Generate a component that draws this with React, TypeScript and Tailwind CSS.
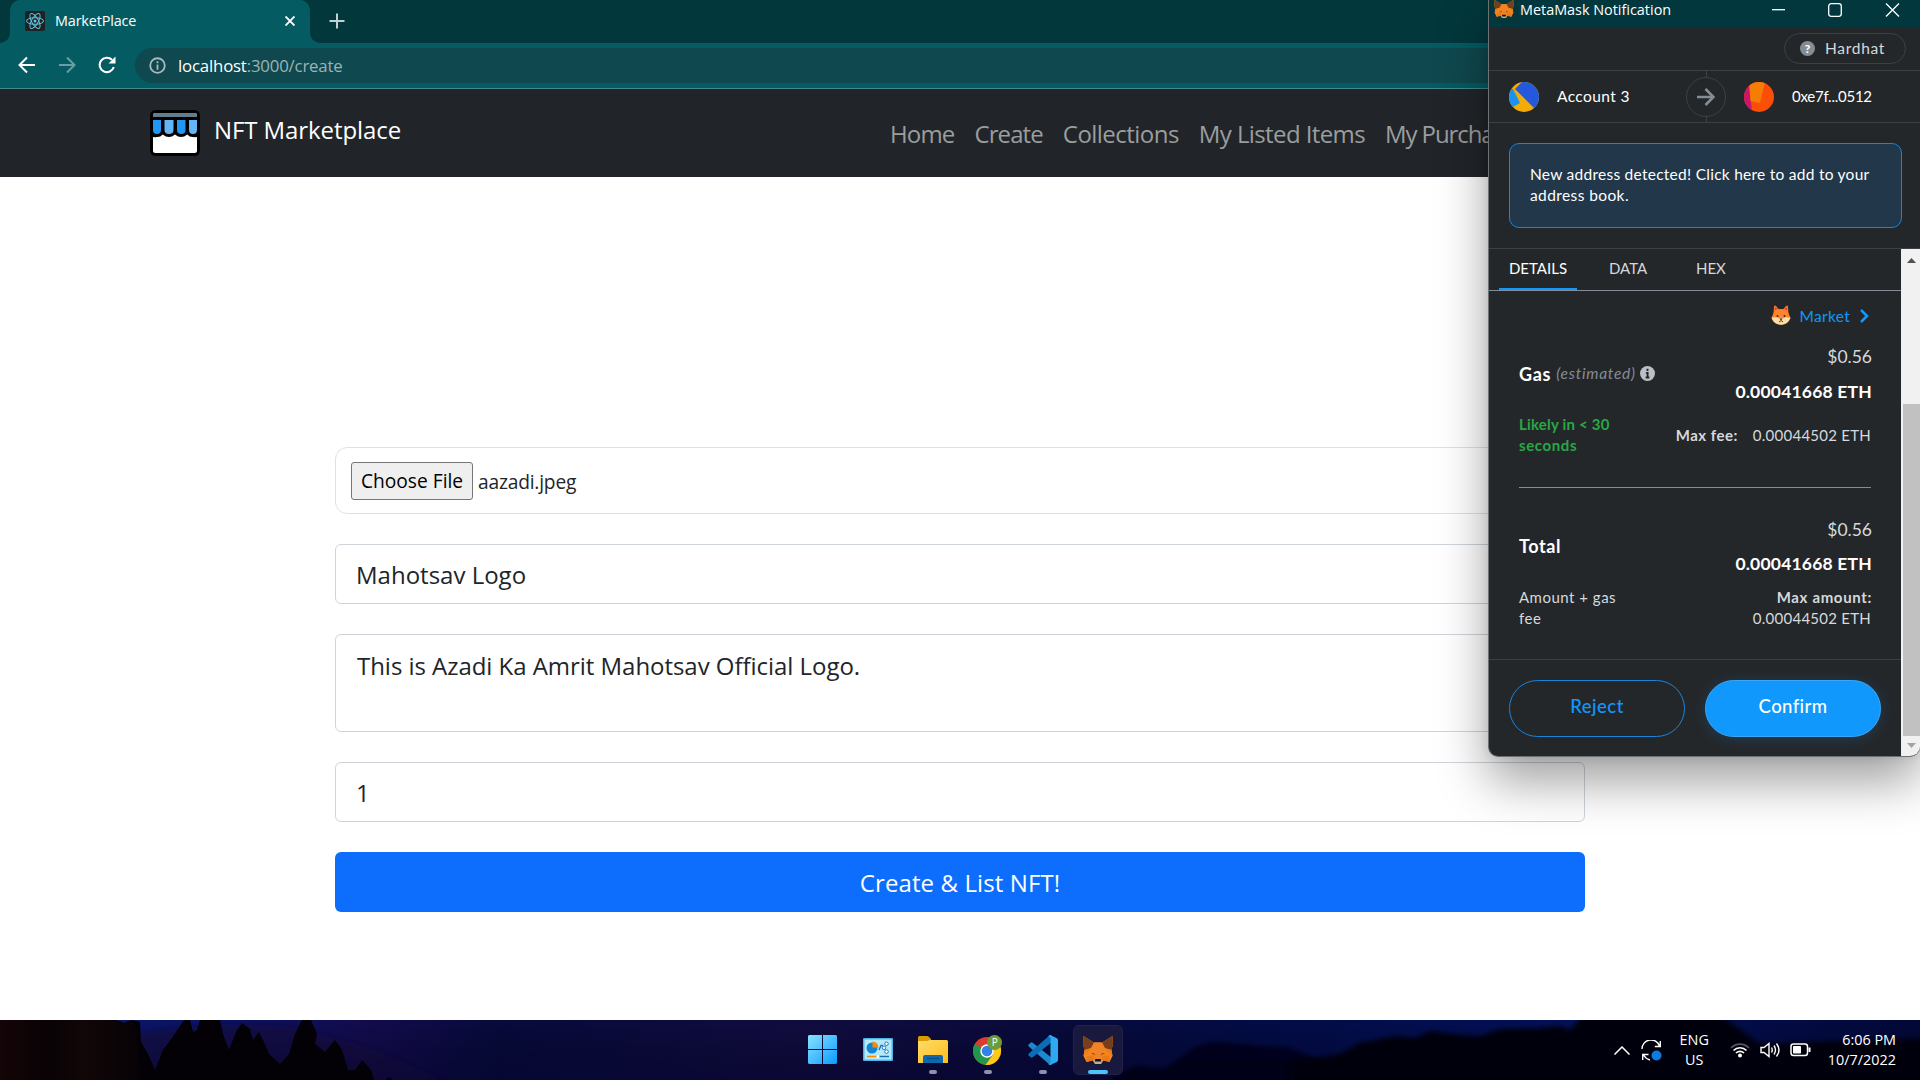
import React from "react";

function MetaFox({ className }: { className: string }) {
  return (
    <svg viewBox="0 0 30 28" className={className}>
      <path d="M0.5 0 L11 6.5 H19 L29.5 0 L30 8 L28.500 14 L29.5 20 L26.5 26 L20.500 24.5 L18 28 H12 L9.500 24.5 L3.500 26 L0.500 20 L1.500 14 L0 8Z" fill="#f6851b" />
      <path d="M0.500 0 L11 6.500 L8 12 L1.500 14 L0 8Z M29.500 0 L19 6.500 L22 12 L28.500 14 L30 8Z" fill="#763e1a" />
      <path d="M11 6.500 L8.500 13 L12 19.500 L11 24 L19 24 L18 19.500 L21.500 13 L19 6.500Z" fill="#f08228" />
      <path d="M0.500 20 L1.500 14 L8.500 13 L3 18Z M29.500 20 L28.500 14 L21.500 13 L27 18Z" fill="#ec7c1c" />
      <path d="M8 17 L12.500 19.300 L10.500 17.200Z M22 17 L17.500 19.300 L19.500 17.200Z" fill="#59371f" />
      <path d="M4 20 L10.500 19.500 L11 24 L3.500 26Z M26 20 L19.500 19.500 L19 24 L26.500 26Z" fill="#e8791b" />
      <path d="M10.500 24 H19.500 L18 28 H12Z" fill="#c0ad9e" />
      <path d="M12.300 23 H17.700 L18.200 25.500 H11.800Z" fill="#161616" />
    </svg>
  );
}

function EmojiFox() {
  return (
    <svg viewBox="0 0 20 20" className="h-5 w-5">
      <path d="M2.500 9 L3 1.200 Q4 0 5 1 L8 4.500 H12 L15 1 Q16 0 17 1.200 L17.500 9Z" fill="#f9752b" />
      <path d="M4 5 L4.500 2 L6.500 4.500Z M16 5 L15.500 2 L13.500 4.500Z" fill="#b8432a" />
      <path d="M3 7 Q4 4 10 4 Q16 4 17 7 L19.500 13 Q17 19.500 10 19.800 Q3 19.500 0.500 13Z" fill="#ff822d" />
      <path d="M0.500 12.800 Q6 11.500 8.300 13.500 L10 12.500 L11.700 13.500 Q14 11.500 19.500 12.800 Q17 19.500 10 19.800 Q3 19.500 0.500 12.800Z" fill="#ffdda6" />
      <circle cx="6.500" cy="11" r="0.900" fill="#3a2020" />
      <circle cx="13.500" cy="11" r="0.900" fill="#3a2020" />
      <path d="M8.500 13.500 H11.500 L10 15.500Z" fill="#2b1a1a" />
      <path d="M8 17 L10 15.500 L12 17" stroke="#5a3a2a" fill="none" />
    </svg>
  );
}

function BrowserChrome() {
  return (
    <header className="h-[89px] shrink-0 border-b border-[#43898c] bg-[#045b61]">
      <div className="flex h-[43px] bg-[#02373c]">
        <div className="w-[10px] bg-[#045b61]">
          <div className="h-full rounded-br-[10px] bg-[#02373c]" />
        </div>
        <div className="flex w-[300px] items-center rounded-t-[10px] bg-[#045b61] pr-[15px] pb-px pl-[15px]">
          <svg viewBox="0 0 20 20" className="h-5 w-5" fill="none" stroke="#5cc4dc" strokeWidth="1">
            <rect width="20" height="20" rx="2" fill="#202124" stroke="none" />
            <ellipse cx="10" cy="10" rx="8.500" ry="3.300" />
            <ellipse cx="10" cy="10" rx="8.500" ry="3.300" transform="rotate(60 10 10)" />
            <ellipse cx="10" cy="10" rx="8.500" ry="3.300" transform="rotate(120 10 10)" />
            <circle cx="10" cy="10" r="1.500" fill="#5cc4dc" stroke="none" />
          </svg>
          <span className="mb-px ml-[10px] flex-1 text-[14.4px] leading-5 tracking-[-0.15px] text-white">MarketPlace</span>
          <svg viewBox="0 0 10 10" className="h-[10px] w-[10px]" stroke="#fff" strokeWidth="1.900">
            <path d="M0.500 0.500 L9.500 9.500 M9.500 0.500 L0.500 9.500" />
          </svg>
        </div>
        <div className="w-[10px] bg-[#045b61]">
          <div className="h-full rounded-bl-[10px] bg-[#02373c]" />
        </div>
        <svg viewBox="0 0 16 16" className="mt-[13px] ml-[9px] h-4 w-4" stroke="#c3d0d2" strokeWidth="2">
          <path d="M8 0.500 V15.500 M0.500 8 H15.500" />
        </svg>
      </div>
      <div className="flex h-[44px] items-center pl-[18px]">
        <svg viewBox="0 0 18 18" className="h-[18px] w-[18px]" fill="none" stroke="#fff" strokeWidth="2">
          <path d="M17 9 H2 M9 1.500 L1.500 9 L9 16.500" />
        </svg>
        <svg viewBox="0 0 18 18" className="ml-[22px] h-[18px] w-[18px]" fill="none" stroke="#6b9da1" strokeWidth="2">
          <path d="M1 9 H16 M9 1.500 L16.500 9 L9 16.500" />
        </svg>
        <svg viewBox="0 0 18 18" className="ml-[22px] h-[18px] w-[18px]" fill="none" stroke="#fff" strokeWidth="2.100">
          <path d="M15.800 11 A7.200 7.200 0 1 1 14 3.800" />
          <path d="M17.500 0.500 V7.500 H10.500Z" fill="#fff" stroke="none" />
        </svg>
        <div className="mt-px ml-[19px] flex h-[35px] flex-1 items-center rounded-l-full bg-[#0f484e] pl-[14px]">
          <svg viewBox="0 0 18 18" className="h-[17px] w-[17px]" fill="none" stroke="#a9babc" strokeWidth="1.900">
            <circle cx="9" cy="9" r="7.700" />
            <path d="M9 8 V13.500 M9 4.500 V6.500" />
          </svg>
          <span className="ml-[12px] text-[16.8px] tracking-[-0.18px] text-white">
            localhost<span className="text-[#9ab4b7]">:3000/create</span>
          </span>
        </div>
      </div>
    </header>
  );
}

function StoreLogo() {
  return (
    <svg viewBox="0 0 50 46" className="h-[46px] w-[50px]">
      <rect x="1.500" y="1.500" width="47" height="43" rx="4" fill="#fff" stroke="#000" strokeWidth="3" />
      <path d="M3 5 Q3 3 5 3 H45 Q47 3 47 5 V7 H3Z" fill="#607d8b" />
      <path d="M0 7 H50 V24 Q48 28 43.500 27 Q40 27.500 37.300 24.500 Q31 29.500 25 24.500 Q19 29.500 12.700 24.500 Q10 27.500 6.500 27 Q2 28 0 24Z" fill="#000" />
      <path d="M3 10 H11 V20 Q11 24 7 24 Q3 24 3 20Z M27 10 H35.500 V20 Q35.500 24 31.300 24 Q27 24 27 20Z" fill="#2196f3" />
      <path d="M14.500 10 H23.500 V20 Q23.500 24 19 24 Q14.500 24 14.500 20Z M39 10 H47 V20 Q47 24 43 24 Q39 24 39 20Z" fill="#64b5f6" />
    </svg>
  );
}

function SiteNav() {
  return (
    <nav className="flex h-[88px] shrink-0 items-center bg-[#212529] pl-[150px]">
      <StoreLogo />
      <span className="mb-[7px] ml-[14px] w-[188px] text-2xl leading-9 tracking-[-0.08px] text-white">NFT Marketplace</span>
      <div className="mt-[2px] ml-[488px] flex gap-5 text-2xl leading-9 whitespace-nowrap text-[#9b9d9e]">
        <a className="tracking-[-0.85px]">Home</a>
        <a className="tracking-[-0.9px]">Create</a>
        <a className="tracking-[-0.53px]">Collections</a>
        <a className="tracking-[-0.6px]">My Listed Items</a>
        <a className="tracking-[-1.1px]">My Purchases</a>
      </div>
    </nav>
  );
}

function CreateForm() {
  return (
    <main className="flex min-h-0 flex-1 flex-col gap-[30px] bg-white pt-[270px] pl-[335px] text-2xl text-[#212529]">
      <div className="flex h-[67px] w-[1250px] items-center rounded-xl border border-[#dfe1e3] pl-[15px] text-[19.2px]">
        <span className="flex h-[38px] w-[122px] items-center justify-center rounded-[3px] border border-[#767676] bg-[#efefef] text-black">
          Choose File
        </span>
        <span className="mt-[2px] ml-[5px] tracking-[-0.2px]">aazadi.jpeg</span>
      </div>
      <div className="flex h-[60px] w-[1250px] items-center rounded-md border border-[#ced4da] pt-[2px] pl-5">
        Mahotsav Logo
      </div>
      <div className="h-[98px] w-[1250px] rounded-md border border-[#ced4da] pt-[12px] pl-[21px] leading-[37px] tracking-[-0.04px]">
        This is Azadi Ka Amrit Mahotsav Official Logo.
      </div>
      <div className="flex h-[60px] w-[1250px] items-center rounded-md border border-[#ced4da] pt-[2px] pl-5">1</div>
      <div className="flex h-[60px] w-[1250px] items-center justify-center rounded-md bg-[#0d6efd] pt-[2px] tracking-[0.1px] text-white">
        Create &amp; List NFT!
      </div>
    </main>
  );
}

function PopupHeader() {
  return (
    <>
      <div className="flex h-7 items-start bg-[#02383d] pl-[5px]">
        <MetaFox className="h-[18px] w-5" />
        <span className="ml-[6px] w-[152px] font-['Open_Sans'] text-[14.4px] leading-[19px] whitespace-nowrap text-white">MetaMask Notification</span>
        <svg viewBox="0 0 128 16" className="mt-[2px] ml-[100px] h-4 w-32" fill="none" stroke="#fff" strokeWidth="1.300">
          <path d="M0 7.700 H13" />
          <rect x="56.700" y="1.700" width="12.600" height="12.600" rx="2.500" />
          <path d="M114 1.500 L127 14.500 M127 1.500 L114 14.500" />
        </svg>
      </div>
      <div className="flex h-[43px] justify-end border-b border-[#3b4046] pt-[5px] pr-[14px]">
        <div className="flex h-[31px] w-[122px] items-center rounded-full border border-[#3b4046] pl-[15px] text-[#d6d9dc]">
          <span className="flex h-[15px] w-[15px] items-center justify-center rounded-full bg-[#848c96] text-[12px] leading-none font-black text-white">
            ?
          </span>
          <span className="ml-[10px] text-[15.5px] tracking-[0.7px]">Hardhat</span>
        </div>
      </div>
      <div className="flex h-[52px] items-center border-b border-[#3b4046] pl-5 text-white">
        <svg viewBox="0 0 30 30" className="h-[30px] w-[30px]">
          <clipPath id="avatarA"><circle cx="15" cy="15" r="15" /></clipPath>
          <g clipPath="url(#avatarA)">
            <rect width="30" height="30" fill="#f3ab05" />
            <path d="M0 7 H4 L11 21 L0 27Z" fill="#1a93f0" />
            <path d="M13 0 H30 V30 L25 26 L6 7Z" fill="#2459dd" />
          </g>
        </svg>
        <span className="ml-[18px] w-[129px] text-[15.5px] tracking-[0.4px]">Account 3</span>
        <div className="flex h-[52px] w-10 flex-col items-center">
          <div className="h-[6px] w-px bg-[#3b4046]" />
          <div className="flex h-10 w-10 items-center justify-center rounded-full border border-[#3b4046]">
            <svg viewBox="0 0 18 18" className="h-[18px] w-[18px]" fill="none" stroke="#848c96" strokeWidth="2.600">
              <path d="M0 9 H16 M8.500 1 L16.500 9 L8.500 17" />
            </svg>
          </div>
          <div className="h-[6px] w-px bg-[#3b4046]" />
        </div>
        <svg viewBox="0 0 30 30" className="ml-[18px] h-[30px] w-[30px]">
          <clipPath id="avatarB"><circle cx="15" cy="15" r="15" /></clipPath>
          <g clipPath="url(#avatarB)">
            <rect width="30" height="30" fill="#fb4f05" />
            <path d="M0 0 H5 L8 30 H0Z" fill="#cb1668" />
            <path d="M5 0 H21 L16 21 L6.500 19Z" fill="#f57d05" />
          </g>
        </svg>
        <span className="ml-[18px] text-[15px] tracking-[-0.25px]">0xe7f...0512</span>
      </div>
      <div className="h-[126px] border-b border-[#3b4046] pt-5 pl-5">
        <div className="h-[85px] w-[393px] rounded-[10px] border border-[#1b83d8] bg-[#22374a] pt-5 pl-5 text-[15.5px] leading-[21px] tracking-[0.26px] whitespace-nowrap text-white">
          New address detected! Click here to add to your
          <br />
          <span className="tracking-[0.4px]">address book.</span>
        </div>
      </div>
    </>
  );
}

function FeeDetails() {
  return (
    <div className="w-[412px] text-[15px] text-[#d6d9dc]">
      <div className="flex h-[42px] border-b border-[#848c96] pl-[10px] leading-[39px]">
        <span className="h-[41px] w-[78px] border-b-2 border-[#1098fc] text-center text-white">DETAILS</span>
        <span className="ml-8 w-[87px]">DATA</span>
        <span>HEX</span>
      </div>
      <div className="flex h-12 items-center justify-end pt-[3px] pr-[32px] text-[#1098fc]">
        <span className="mb-[4px]"><EmojiFox /></span>
        <span className="ml-[9px] text-[15.5px] tracking-[0.3px]">Market</span>
        <svg viewBox="0 0 9 14" className="mb-[2px] ml-[10px] h-[14px] w-[9px]" fill="none" stroke="#1098fc" strokeWidth="2.600">
          <path d="M1 1 L7 7 L1 13" />
        </svg>
      </div>
      <section className="pr-[29px] pl-[30px]">
        <div className="flex h-[70px] items-center justify-between">
          <div className="flex items-center">
            <b className="text-[18px] tracking-[0.7px] text-white">Gas</b>
            <i className="ml-[5px] text-[15.5px] tracking-[0.75px] text-[#848c96]">(estimated)</i>
            <svg viewBox="0 0 16 16" className="mb-[2px] ml-[4px] h-[15px] w-[15px]">
              <circle cx="8" cy="8" r="8" fill="#bbc0c5" />
              <path d="M8 3 V5.200 M6.300 7.300 H8.100 V12 M6 12.200 H10" stroke="#24272a" strokeWidth="2" fill="none" />
            </svg>
          </div>
          <div className="text-right text-[17.5px] leading-[35px]">
            <div>$0.56</div>
            <div className="font-bold tracking-[0.2px] text-white">0.00041668 ETH</div>
          </div>
        </div>
        <div className="mt-[5px] flex h-[42px] items-center justify-between leading-[21px]">
          <div className="font-bold tracking-[0.2px] text-[#28a745]">
            Likely in &lt; 30
            <br />
            <span className="tracking-[0.6px]">seconds</span>
          </div>
          <div className="pr-px">
            <b className="tracking-[0.5px]">Max fee:</b>
            <span className="ml-[15px] tracking-[0.25px]">0.00044502 ETH</span>
          </div>
        </div>
        <hr className="mt-[31px] mr-px border-[#848c96]" />
        <div className="mt-6 flex h-[68px] items-center justify-between">
          <b className="mt-px text-[18px] tracking-[0.6px] text-white">Total</b>
          <div className="mt-px text-right text-[17.5px] leading-[34px]">
            <div>$0.56</div>
            <div className="font-bold tracking-[0.2px] text-white">0.00041668 ETH</div>
          </div>
        </div>
        <div className="mt-[7px] flex justify-between leading-[21px]">
          <div className="tracking-[0.5px]">
            Amount + gas
            <br />
            fee
          </div>
          <div className="text-right">
            <b className="tracking-[0.65px]">Max amount:</b>
            <div className="pr-px tracking-[0.25px]">0.00044502 ETH</div>
          </div>
        </div>
      </section>
      <div className="mt-[30px] flex gap-5 border-t border-[#3b4046] pt-5 pl-5 text-[18.5px] leading-[51px] font-medium">
        <div className="h-[57px] w-44 rounded-full border border-[#1b83d8] text-center tracking-[0.5px] text-[#1098fc]">Reject</div>
        <div className="h-[57px] w-44 rounded-full border border-[#3ba7f8] bg-[#1098fc] text-center tracking-[0.4px] text-white shadow-[0_2px_14px_rgba(16,152,252,0.2)]">
          Confirm
        </div>
      </div>
    </div>
  );
}

function WalletPopup() {
  return (
    <aside className="absolute top-0 left-[1488px] h-[757px] w-[432px] overflow-hidden rounded-b-[10px] border-b border-l border-[#6e7072] bg-[#24272a] font-['Lato',sans-serif]">
      <PopupHeader />
      <div className="flex">
        <FeeDetails />
        <div className="flex h-[507px] w-[19px] flex-col justify-between bg-[#f1f1f1]">
          <svg viewBox="0 0 19 20" className="h-5 w-[19px]"><path d="M10.500 9 L15 14 H6Z" fill="#505050" /></svg>
          <div className="mt-[135px] ml-[2px] flex-1 bg-[#c1c1c1]" />
          <svg viewBox="0 0 19 20" className="h-5 w-[19px]"><path d="M6 7 H15 L10.500 12Z" fill="#a3a3a3" /></svg>
        </div>
      </div>
    </aside>
  );
}

function Wallpaper() {
  return (
    <svg viewBox="0 0 1920 60" preserveAspectRatio="none" className="absolute inset-0 h-full w-full">
      <defs>
        <linearGradient id="sky">
          <stop offset="0" stopColor="#0b1a70" />
          <stop offset="0.120" stopColor="#0a1260" />
          <stop offset="0.190" stopColor="#130b4e" />
          <stop offset="0.260" stopColor="#070a3c" />
          <stop offset="0.420" stopColor="#110c40" />
          <stop offset="0.550" stopColor="#080a3c" />
          <stop offset="0.650" stopColor="#020c46" />
          <stop offset="0.820" stopColor="#021058" />
          <stop offset="1" stopColor="#020838" />
        </linearGradient>
        <linearGradient id="dusk" x2="0" y2="1">
          <stop offset="0" stopColor="#000" stopOpacity="0" />
          <stop offset="1" stopColor="#000020" stopOpacity="0.350" />
        </linearGradient>
        <linearGradient id="rock">
          <stop offset="0" stopColor="#140507" />
          <stop offset="0.350" stopColor="#080204" />
          <stop offset="0.600" stopColor="#120607" />
          <stop offset="1" stopColor="#060205" />
        </linearGradient>
        <linearGradient id="hill" x2="0" y2="1">
          <stop offset="0" stopColor="#03041f" />
          <stop offset="1" stopColor="#030210" />
        </linearGradient>
        <filter id="soften" x="-5%" y="-20%" width="110%" height="140%">
          <feGaussianBlur stdDeviation="2" />
        </filter>
      </defs>
      <rect width="1920" height="60" fill="url(#sky)" />
      <path d="M140 14 Q220 0 300 8 Q350 22 380 32 Q420 50 445 60 H140Z" fill="#120b40" opacity="0.700" filter="url(#soften)" />
      <rect width="1920" height="60" fill="url(#dusk)" />
      <path d="M0 0 H116 L124 3 L132 0 L140 2 L141 22 L148 34 L155 50 L163 30 L172 18 L180 6 L184 0 H190 L193 12 L197 10 L200 0 H220 L223 14 L229 30 L236 12 L242 3 L250 9 L253 20 L259 12 L264 22 L269 34 L280 44 L289 34 L295 14 L302 0 H311 L317 14 L315 24 L325 32 L335 20 L342 30 L348 50 L355 50 L362 40 L371 50 L374 60 H0Z" fill="#030106" />
      <path d="M0 0 H116 L124 3 L132 0 L138 12 L140 60 H0Z" fill="url(#rock)" />
      <path d="M385 60 L389 57 L393 60Z" fill="#030106" />
      <path d="M1112 70 V58 L1135 46 L1165 49 L1195 27 L1212 22 L1240 24 L1290 28 L1320 40 L1345 48 L1375 54 V70Z" fill="url(#hill)" filter="url(#soften)" />
      <path d="M1290 70 V42 L1340 34 L1360 23 L1395 16 L1415 18 L1430 11 L1460 15 L1480 16 L1500 9 L1540 8 L1560 6 L1570 10 L1583 -5 H1720 L1760 24 L1930 18 V70Z" fill="#02020f" filter="url(#soften)" />
    </svg>
  );
}

function TaskButton({ children, mark }: { children: React.ReactNode; mark?: "open" | "active" }) {
  return (
    <div
      className={
        mark === "active"
          ? "flex h-[50px] w-[50px] flex-col items-center rounded-md border border-[#222248] bg-[#18193c] pt-[8px]"
          : "flex h-[50px] w-[50px] flex-col items-center pt-[9px]"
      }
    >
      <div className="flex h-[31px] items-center">{children}</div>
      {mark === "open" && <div className="mt-[5px] h-1 w-2 rounded-full bg-[#9090ae]" />}
      {mark === "active" && <div className="mt-[5px] h-1 w-5 shrink-0 rounded-full bg-[#4cc2ff]" />}
    </div>
  );
}

function Taskbar() {
  return (
    <footer className="relative h-[60px] shrink-0 bg-[#06072c]">
      <Wallpaper />
      <div className="relative grid h-full grid-cols-[1fr_325px_1fr] items-center">
        <div />
        <div className="flex gap-[5px]">
          <TaskButton>
            <svg viewBox="0 0 29 29" className="h-[29px] w-[29px]">
              <defs>
                <linearGradient id="win" x2="1" y2="1">
                  <stop offset="0" stopColor="#8ae2ff" />
                  <stop offset="1" stopColor="#0a9bff" />
                </linearGradient>
              </defs>
              <path d="M1 0 H14 V14 H0 V1Z M15 0 H28 L29 1 V14 H15Z M0 15 H14 V29 H1 L0 28Z M15 15 H29 V28 L28 29 H15Z" fill="url(#win)" />
            </svg>
          </TaskButton>
          <TaskButton>
            <svg viewBox="0 0 30 23" className="h-[23px] w-[30px]">
              <rect width="30" height="23" rx="1" fill="#4cb4e4" />
              <rect x="1.500" y="1.500" width="27" height="20" fill="#b5e8fb" />
              <circle cx="9" cy="10" r="5.500" fill="#1384d0" />
              <path d="M9.500 3.500 A6 6 0 0 1 15.500 9.500 H9.500Z" fill="#f58b0b" />
              <path d="M16 12 L18 7.500 H20" fill="none" stroke="#1670b8" strokeWidth="1.300" />
              <g fill="#f4fbff" stroke="#1670b8" strokeWidth="0.900">
                <circle cx="23.500" cy="5.800" r="1.800" /><circle cx="21" cy="9.800" r="1.800" /><circle cx="23.500" cy="13.600" r="1.800" />
              </g>
              <path d="M4 18.500 H14" stroke="#f58b0b" strokeWidth="1.500" />
              <path d="M15 18.500 H26" stroke="#1670b8" strokeWidth="1.500" />
              <circle cx="15" cy="18.500" r="1.500" fill="#fff" />
            </svg>
          </TaskButton>
          <TaskButton mark="open">
            <svg viewBox="0 0 30 27" className="h-[27px] w-[30px]">
              <defs>
                <linearGradient id="folder" x2="1" y2="1"><stop offset="0" stopColor="#ffdc68" /><stop offset="1" stopColor="#fbbd1c" /></linearGradient>
              </defs>
              <path d="M0 1.500 Q0 0 1.500 0 H9 Q10 0 11 1 L13 3 V8 H0Z" fill="#dc9c00" />
              <path d="M0 5 H9 L12 4 H28.500 Q30 4 30 5.500 V27 H0Z" fill="url(#folder)" />
              <path d="M5 27 V21 Q5 19 7 19 H23 Q25 19 25 21 V27Z" fill="#0d69ad" />
              <path d="M9 22.500 H21" stroke="#084a80" strokeWidth="1.200" />
            </svg>
          </TaskButton>
          <TaskButton mark="open">
            <svg viewBox="0 0 30 30" className="h-[30px] w-[30px]">
              <circle cx="14" cy="16" r="14" fill="#de3b30" />
              <path d="M14 16 L1.800 9 A14 14 0 0 0 12.500 29.900 L20 19.500Z" fill="#22964a" />
              <path d="M14 16 L26.100 9 A14 14 0 0 1 12.500 29.900 L20 19.500Z" fill="#fbc919" />
              <circle cx="14" cy="16" r="6.700" fill="#fff" />
              <circle cx="14" cy="16" r="5.300" fill="#357fe8" />
              <circle cx="21.500" cy="7.500" r="7.500" fill="#6a9c38" />
              <text x="21.700" y="11.200" textAnchor="middle" fill="#fff" className="font-['Open_Sans'] text-[10px]">P</text>
            </svg>
          </TaskButton>
          <TaskButton mark="open">
            <svg viewBox="0 0 30 30" className="h-[30px] w-[30px]">
              <path d="M0.500 9.500 L3 7.500 Q4 7 5 8 L24 23 V29.500 L22 30 L0.800 11.500 Q0 10.500 0.500 9.500Z" fill="#1b88d0" />
              <path d="M0.500 20.500 L3 22.500 Q4 23 5 22 L24 7 V0.500 L22 0 L0.800 18.500 Q0 19.500 0.500 20.500Z" fill="#0a6db5" />
              <path d="M22 0 L28.500 3 Q30 4 30 5 V25 Q30 26.500 28.500 27.200 L22 30 L20 29 Q22.500 29 22.500 26.500 V3.500 Q22.500 1.500 20 1.200Z" fill="#2fa8f2" />
            </svg>
          </TaskButton>
          <TaskButton mark="active">
            <MetaFox className="h-7 w-[30px]" />
          </TaskButton>
        </div>
        <div className="flex h-full items-center justify-end pr-6 text-white">
          <svg viewBox="0 0 16 9" className="h-[9px] w-4" fill="none" stroke="#fff" strokeWidth="1.500"><path d="M0.500 8.500 L8 1 L15.500 8.500" /></svg>
          <svg viewBox="0 0 21 21" className="ml-[11px] h-[21px] w-[21px]" fill="none" stroke="#fff" strokeWidth="1.400">
            <path d="M1 9 A9 9 0 0 1 18.500 6 M19.300 1 V6.500 H13.800 M9 20 Q5 19 2.500 15 M1.700 20 V14.500 H7.500" />
            <circle cx="15.500" cy="15.500" r="5" fill="#0a7ce0" stroke="none" />
          </svg>
          <div className="ml-[18px] text-center text-[14.4px] leading-5">ENG<br />US</div>
          <svg viewBox="0 0 20 16" className="ml-[21px] h-4 w-5" fill="none" strokeWidth="1.600">
            <path d="M1 6 A12.500 12.500 0 0 1 19 6" stroke="#55556a" />
            <path d="M3.500 8.500 A9 9 0 0 1 16.500 8.500 M6 11 A5.800 5.800 0 0 1 14 11" stroke="#fff" />
            <circle cx="10" cy="13.500" r="2" fill="#fff" />
          </svg>
          <svg viewBox="0 0 21 16" className="ml-[10px] h-4 w-[21px]" fill="none" stroke="#fff" strokeWidth="1.400">
            <path d="M1 5.500 H4 L9 1.500 V14.500 L4 10.500 H1Z M11.500 5.500 Q13 8 11.500 10.500 M14 3.500 Q17 8 14 12.500 M16.500 1.500 Q21.500 8 16.500 14.500" />
          </svg>
          <svg viewBox="0 0 21 14" className="ml-[9px] h-[14px] w-[21px]" fill="none" stroke="#fff" strokeWidth="1.500">
            <rect x="1" y="1" width="16.500" height="11.500" rx="2.500" />
            <rect x="3" y="3" width="8" height="7.500" rx="0.800" fill="#fff" stroke="none" />
            <path d="M19.500 4.500 V9" strokeWidth="2" />
          </svg>
          <div className="ml-[17px] text-right text-[14.4px] leading-5">6:06 PM<br />10/7/2022</div>
        </div>
      </div>
    </footer>
  );
}

export default function App() {
  return (
    <div className="relative flex h-[1080px] w-[1920px] flex-col overflow-hidden bg-white font-['Open_Sans',sans-serif]">
      <BrowserChrome />
      <SiteNav />
      <CreateForm />
      <Taskbar />
      <div className="pointer-events-none absolute inset-x-0 top-0 h-[1020px] overflow-hidden">
        <div className="absolute top-0 left-[1488px] h-[757px] w-[432px] rounded-b-[10px] shadow-[0_24px_50px_rgba(0,0,0,0.38),0_0_10px_rgba(0,0,0,0.1)]" />
      </div>
      <WalletPopup />
    </div>
  );
}
